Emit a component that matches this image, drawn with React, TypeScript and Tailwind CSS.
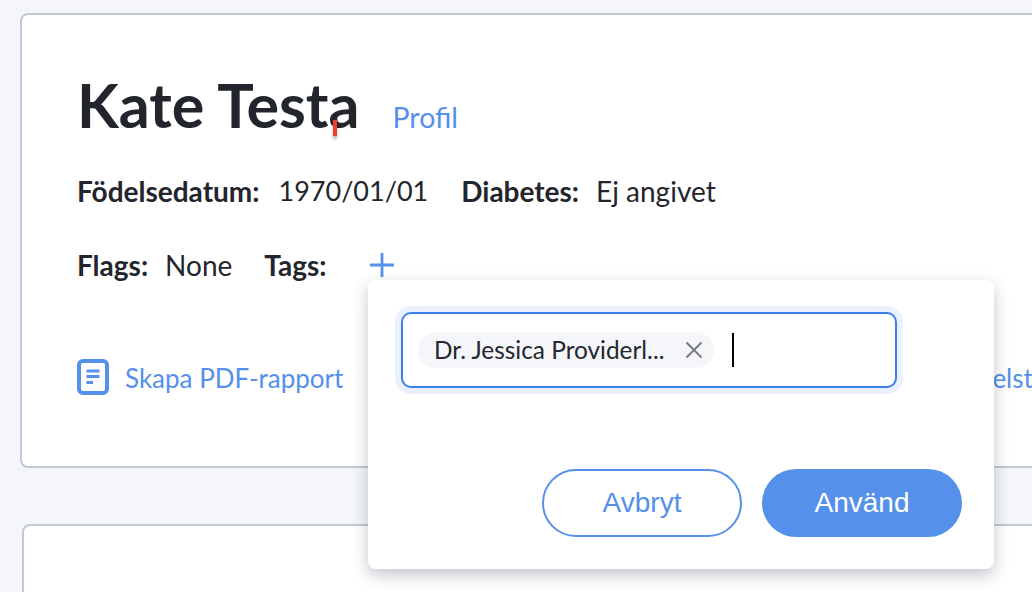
function ReportIcon() {
  return (
    <svg width="32" height="36" viewBox="0 0 32 36" fill="none" className="shrink-0">
      <rect x="2" y="2" width="28" height="32" rx="4" stroke="#5590ea" strokeWidth="4" />
      <path d="M9.500 10.500h13v3h-13zM9.500 16h13v3h-13zM9.500 22h6.500v3H9.500z" fill="#5590ea" />
    </svg>
  );
}

function TagPopover() {
  return (
    <div className="absolute left-[368px] top-[280px] z-10 flex h-[289px] w-[626px] flex-col rounded-[8px] bg-white pl-[33px] pr-[32px] pt-[32px] shadow-[0_6px_16px_rgba(40,50,70,0.28)]">
      <div className="flex h-[76px] w-[496px] items-center rounded-[10px] border-[2px] border-[#3b7eed] bg-white pl-[15px] shadow-[0_0_0_6px_#ebf1fc]">
        <div className="flex h-[36px] w-[296px] items-center rounded-full bg-[#f4f6fa] pl-[16px] pr-[11px]">
          <span className="flex-1 whitespace-nowrap text-[24.400px] text-[#24272e]">Dr. Jessica Providerl...</span>
          <svg width="18" height="18" viewBox="0 0 18 18" fill="none">
            <path d="M1.500 1.500l15 15M16.500 1.500l-15 15" stroke="#777a80" strokeWidth="1.800" />
          </svg>
        </div>
        <div className="ml-[18px] h-[34px] w-[2px] bg-black" />
      </div>
      <div className="mt-auto mb-[32px] flex justify-end gap-[20px]">
        <button className="h-[68px] w-[200px] rounded-full border-[2px] border-[#5590ea] bg-white font-['Liberation_Sans'] text-[28px] text-[#5590ea]">Avbryt</button>
        <button className="h-[68px] w-[200px] rounded-full bg-[#5590ea] font-['Liberation_Sans'] text-[28px] text-white">Använd</button>
      </div>
    </div>
  );
}

export default function App() {
  return (
    <div className="relative h-[592px] w-[1032px] overflow-hidden bg-[#f4f6fa] pl-[20px] pt-[13px] font-['Lato',sans-serif] text-[#22252c]">
      <div className="h-[455px] w-[1100px] rounded-[8px] border-[2px] border-[#c1c9d5] bg-white pl-[55px] pt-[48px]">
        <div className="flex items-baseline">
          <h1 className="text-[61px] font-bold leading-[84px]">Kate Testa</h1>
          <a className="ml-[33px] text-[28.500px] text-[#5590ea]">Profil</a>
        </div>
        <div className="mt-[24px] flex h-[40px] items-center text-[28px]">
          <b>Födelsedatum:</b>
          <span className="ml-[19px] text-[27px]">1970/01/01</span>
          <b className="ml-[33px]">Diabetes:</b>
          <span className="ml-[17px]">Ej angivet</span>
        </div>
        <div className="mt-[34px] flex h-[40px] items-center text-[28px]">
          <b>Flags:</b>
          <span className="ml-[17px]">None</span>
          <b className="ml-[32px]">Tags:</b>
          <svg width="24" height="24" viewBox="0 0 24 24" fill="none" className="ml-[43px]">
            <path d="M12 0v24M0 12h24" stroke="#5590ea" strokeWidth="2.800" />
          </svg>
        </div>
        <div className="mt-[72px] flex h-[40px] items-center text-[26px] text-[#5590ea]">
          <ReportIcon />
          <span className="ml-[16px] pt-[3px]">Skapa PDF-rapport</span>
          <span className="ml-[649px] pt-[3px]">elst</span>
        </div>
      </div>
      <div className="ml-[2px] mt-[56px] h-[100px] w-[1100px] rounded-[8px] border-[2px] border-[#c1c9d5] bg-white" />
      <TagPopover />
      <div className="absolute left-[333px] top-[120px] h-[16px] w-[4px] bg-[#ee4026] shadow-[0_3px_3px_rgba(0,0,0,0.3)]" />
    </div>
  );
}
